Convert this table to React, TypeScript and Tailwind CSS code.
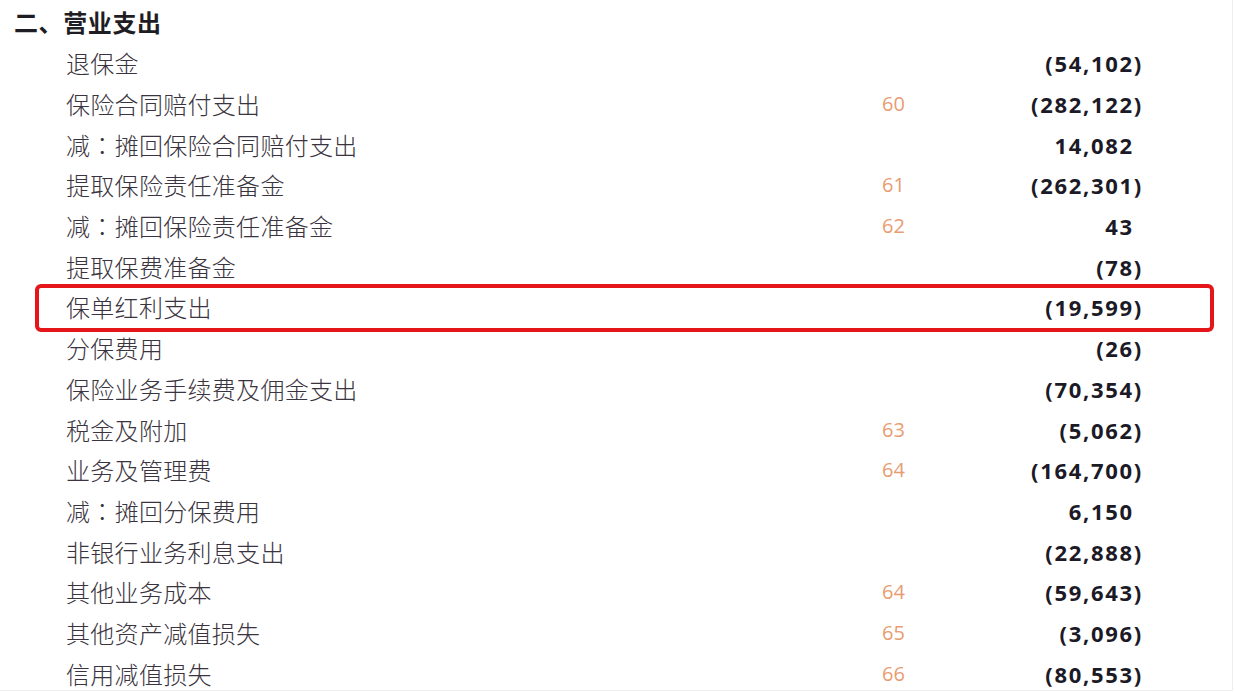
const ROWS = [
  { label: '退保金', note: '', value: '(54,102)' },
  { label: '保险合同赔付支出', note: '60', value: '(282,122)' },
  { label: '减：摊回保险合同赔付支出', note: '', value: '14,082' },
  { label: '提取保险责任准备金', note: '61', value: '(262,301)' },
  { label: '减：摊回保险责任准备金', note: '62', value: '43' },
  { label: '提取保费准备金', note: '', value: '(78)' },
  { label: '保单红利支出', note: '', value: '(19,599)', highlight: true },
  { label: '分保费用', note: '', value: '(26)' },
  { label: '保险业务手续费及佣金支出', note: '', value: '(70,354)' },
  { label: '税金及附加', note: '63', value: '(5,062)' },
  { label: '业务及管理费', note: '64', value: '(164,700)' },
  { label: '减：摊回分保费用', note: '', value: '6,150' },
  { label: '非银行业务利息支出', note: '', value: '(22,888)' },
  { label: '其他业务成本', note: '64', value: '(59,643)' },
  { label: '其他资产减值损失', note: '65', value: '(3,096)' },
  { label: '信用减值损失', note: '66', value: '(80,553)' },
]

// full-width colon sits centred in the reference, as in the TC font
function Label({ text }: { text: string }) {
  const parts = text.split('：')
  if (parts.length === 1) return <>{text}</>
  return (
    <>
      {parts[0]}
      <span className="font-['Noto_Sans_CJK_TC',sans-serif]">：</span>
      {parts[1]}
    </>
  )
}

export default function App() {
  return (
    <div className="w-[1233px] h-[691px] overflow-hidden bg-white border-r border-b border-[#eeeeee] pt-[1px] font-['Noto_Sans_CJK_SC',sans-serif]">
      {/* Section heading */}
      <div className="h-[42px] flex items-center pl-[14px] text-[24px] font-bold text-[#1f1d24] tracking-[0.6px]">
        二、营业支出
      </div>

      {ROWS.map((row) => {
        const negative = row.value.startsWith('(')
        return (
          <div key={row.label} className="relative h-[40.7px] flex items-center">
            <div className="w-[882px] pl-[66px] text-[24px] font-light text-[#3a3440] tracking-[0.3px] leading-none">
              <Label text={row.label} />
            </div>
            <div className="w-[60px] text-[20px] text-[#e89c72] font-['Open_Sans',sans-serif] leading-none">
              {row.note}
            </div>
            <div className="w-[201px] text-right text-[22px] font-bold text-[#1b1a26] font-['Open_Sans',sans-serif] tracking-[1.7px] -mr-[1.7px] leading-none">
              {row.value}
              {!negative && <span className="invisible">)</span>}
            </div>
            {row.highlight && (
              <div className="absolute left-[35px] w-[1179px] -top-[3px] -bottom-[4px] border-[4px] border-[#e5161a] rounded-[6px]" />
            )}
          </div>
        )
      })}
    </div>
  )
}
